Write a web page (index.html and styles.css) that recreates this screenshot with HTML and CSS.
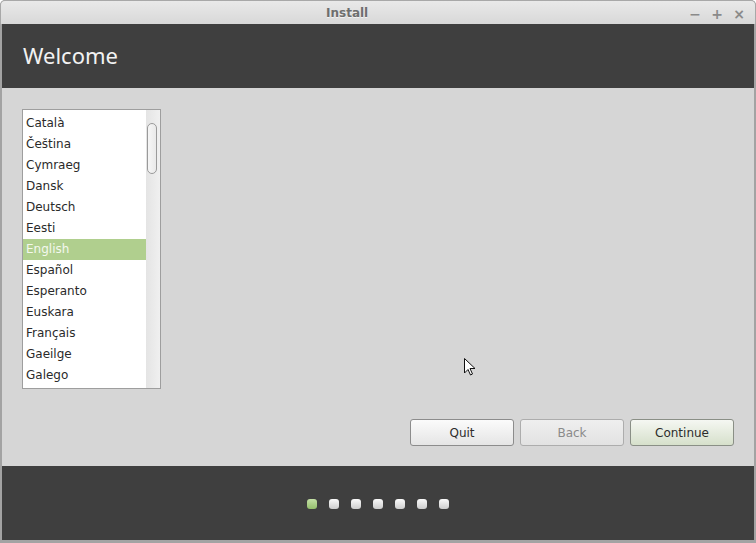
FILE: index.html
```html
<!DOCTYPE html>
<html>
<head>
<meta charset="utf-8">
<link rel="stylesheet" href="styles.css">
</head>
<body>
<div class="window">
  <div class="titlebar">
    <span class="title">Install</span>
    <div class="wm-buttons">
      <span class="wm min">−</span>
      <span class="wm max">+</span>
      <span class="wm close">×</span>
    </div>
  </div>
  <div class="header">
    <h1 class="heading">Welcome</h1>
  </div>
  <div class="main">
    <div class="content">
      <div class="listbox">
        <ul class="items">
          <li class="item">Català</li>
          <li class="item">Čeština</li>
          <li class="item">Cymraeg</li>
          <li class="item">Dansk</li>
          <li class="item">Deutsch</li>
          <li class="item">Eesti</li>
          <li class="item selected">English</li>
          <li class="item">Español</li>
          <li class="item">Esperanto</li>
          <li class="item">Euskara</li>
          <li class="item">Français</li>
          <li class="item">Gaeilge</li>
          <li class="item">Galego</li>
        </ul>
        <div class="scrollbar"><div class="thumb"></div></div>
      </div>
    </div>
    <div class="buttons">
      <button class="btn">Quit</button>
      <button class="btn disabled">Back</button>
      <button class="btn primary">Continue</button>
    </div>
  </div>
  <div class="footer">
    <span class="dot active"></span>
    <span class="dot"></span>
    <span class="dot"></span>
    <span class="dot"></span>
    <span class="dot"></span>
    <span class="dot"></span>
    <span class="dot"></span>
  </div>
  <svg class="cursor" width="14" height="20" viewBox="0 0 14 20">
    <path d="M1.5 1.5 L1.5 16 L5 12.5 L7.5 18 L9.5 17 L7 11.5 L12 11.5 Z" fill="#fff" stroke="#111" stroke-width="1" stroke-linejoin="round"/>
  </svg>
</div>
</body>
</html>
```
FILE: styles.css
```css
* { box-sizing: border-box; }
html, body { margin: 0; padding: 0; background: #ffffff; }
body { width: 756px; height: 543px; overflow: hidden; font-family: "DejaVu Sans", sans-serif; }

.window {
  position: relative;
  width: 756px;
  height: 543px;
  display: flex;
  flex-direction: column;
  background: #a3a3a3;
  border-radius: 5px 5px 0 0;
  padding: 0 2px 3px 2px;
  overflow: hidden;
}

.titlebar {
  height: 24px;
  margin: 0 -2px;
  flex: none;
  position: relative;
  display: flex;
  align-items: center;
  background: linear-gradient(#e9e9e9, #d8d8d8);
  border: 1px solid #a8a8a8;
  border-bottom: none;
  border-radius: 5px 5px 0 0;
}
.title {
  position: absolute;
  left: 325px;
  top: 5px;
  font-family: "DejaVu Sans", sans-serif;
  font-weight: bold;
  font-size: 12px;
  color: #6e6e6e;
  text-shadow: 0 1px 0 rgba(255,255,255,0.6);
}
.wm-buttons {
  margin-left: auto;
  display: flex;
  gap: 6px;
  padding-right: 8px;
  padding-top: 2px;
}
.wm {
  width: 16px;
  text-align: center;
  font-family: "DejaVu Sans", sans-serif;
  font-weight: bold;
  font-size: 14px;
  color: #8a8a8a;
  line-height: 16px;
}

.header {
  height: 64px;
  flex: none;
  background: #3f3f3f;
  padding-left: 21px;
  display: flex;
  align-items: center;
}
.heading {
  margin: 0;
  font-family: "Noto Sans", sans-serif;
  font-weight: normal;
  font-size: 22px;
  color: #f2f2f2;
  line-height: 1;
  padding-bottom: 2px;
}

.main {
  flex: 1;
  background: #d6d6d6;
  display: flex;
  flex-direction: column;
  padding: 21px 20px 20px 20px;
}
.content { flex: 1; display: flex; }

.listbox {
  width: 139px;
  height: 280px;
  border: 1px solid #9e9e9e;
  background: #ffffff;
  display: flex;
}
.items {
  list-style: none;
  margin: 0;
  padding: 3px 0 0 0;
  flex: 1;
  overflow: hidden;
}
.item {
  height: 21px;
  line-height: 21px;
  padding-left: 3px;
  font-size: 12px;
  color: #2a2a2a;
  white-space: nowrap;
}
.item.selected {
  background: #b0cf8e;
  color: #f4f8ee;
}
.scrollbar {
  width: 14px;
  flex: none;
  background: linear-gradient(90deg, #e4e4e4, #f0f0f0);
  padding: 13px 0 0 1px;
}
.thumb {
  width: 10px;
  height: 51px;
  border: 1px solid #9a9a9a;
  border-radius: 5px;
  background: linear-gradient(90deg, #f6f6f6, #e9e9e9);
}

.buttons {
  display: flex;
  justify-content: flex-end;
  gap: 6px;
}
.btn {
  width: 104px;
  height: 27px;
  border: 1px solid #8c8c8c;
  border-radius: 3px;
  background: linear-gradient(#fbfbfb, #e5e5e5);
  font-family: "DejaVu Sans", sans-serif;
  font-size: 12px;
  color: #2c2c2c;
  padding: 0;
}
.btn.disabled {
  border-color: #adadad;
  background: linear-gradient(#efefef, #e2e2e2);
  color: #8a8a8a;
}
.btn.primary {
  background: linear-gradient(#f5f7f2, #d6e0cb);
  border-color: #8a8f86;
}

.footer {
  height: 74px;
  flex: none;
  background: #3f3f3f;
  display: flex;
  justify-content: center;
  align-items: center;
  gap: 12px;
  padding-top: 1px;
}
.dot {
  width: 10px;
  height: 10px;
  border-radius: 3px;
  background: linear-gradient(#fafafa, #cdcdcd);
}
.dot.active {
  background: linear-gradient(#c4e0a6, #94bf6c);
}

.cursor {
  position: absolute;
  left: 463px;
  top: 357px;
}
```
